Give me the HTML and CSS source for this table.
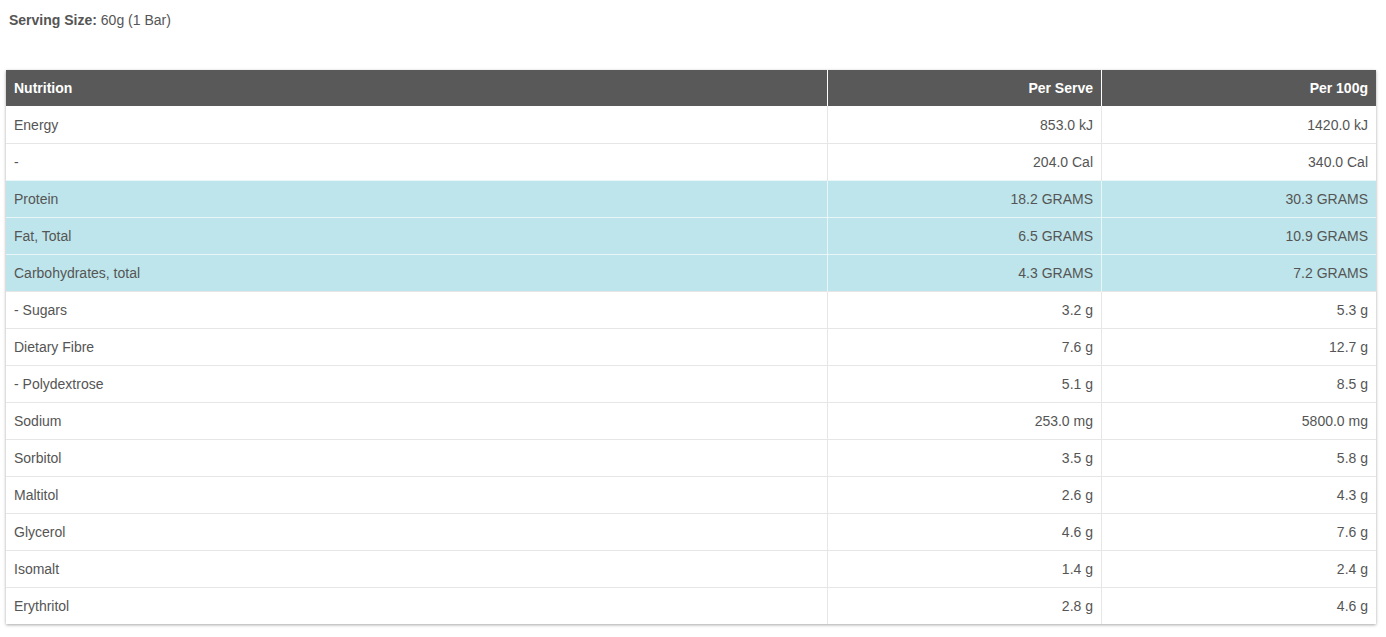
FILE: index.html
```html
<!DOCTYPE html>
<html>
<head>
<meta charset="utf-8">
<link rel="stylesheet" href="styles.css">
</head>
<body>
<div class="page">
  <p class="serving"><strong>Serving Size:</strong> 60g (1 Bar)</p>
  <table class="nutri">
    <thead>
      <tr><th class="name">Nutrition</th><th class="num">Per Serve</th><th class="num">Per 100g</th></tr>
    </thead>
    <tbody>
      <tr><td>Energy</td><td class="num">853.0 kJ</td><td class="num">1420.0 kJ</td></tr>
      <tr><td>-</td><td class="num">204.0 Cal</td><td class="num">340.0 Cal</td></tr>
      <tr class="hl"><td>Protein</td><td class="num">18.2 GRAMS</td><td class="num">30.3 GRAMS</td></tr>
      <tr class="hl"><td>Fat, Total</td><td class="num">6.5 GRAMS</td><td class="num">10.9 GRAMS</td></tr>
      <tr class="hl"><td>Carbohydrates, total</td><td class="num">4.3 GRAMS</td><td class="num">7.2 GRAMS</td></tr>
      <tr><td>- Sugars</td><td class="num">3.2 g</td><td class="num">5.3 g</td></tr>
      <tr><td>Dietary Fibre</td><td class="num">7.6 g</td><td class="num">12.7 g</td></tr>
      <tr><td>- Polydextrose</td><td class="num">5.1 g</td><td class="num">8.5 g</td></tr>
      <tr><td>Sodium</td><td class="num">253.0 mg</td><td class="num">5800.0 mg</td></tr>
      <tr><td>Sorbitol</td><td class="num">3.5 g</td><td class="num">5.8 g</td></tr>
      <tr><td>Maltitol</td><td class="num">2.6 g</td><td class="num">4.3 g</td></tr>
      <tr><td>Glycerol</td><td class="num">4.6 g</td><td class="num">7.6 g</td></tr>
      <tr><td>Isomalt</td><td class="num">1.4 g</td><td class="num">2.4 g</td></tr>
      <tr><td>Erythritol</td><td class="num">2.8 g</td><td class="num">4.6 g</td></tr>
    </tbody>
  </table>
</div>
</body>
</html>
```
FILE: styles.css
```css
html, body {
  margin: 0;
  padding: 0;
  background: #fff;
}
body {
  font-family: Arial, "Liberation Sans", sans-serif;
  color: #555;
  min-height: 637px;
}
.page {
  padding: 12px 10px 12px 6px;
}
.serving {
  margin: 0 0 41px 3px;
  font-size: 14px;
  line-height: 17px;
  color: #555;
}
.serving strong {
  font-weight: bold;
}
.nutri {
  width: 1370px;
  border-collapse: collapse;
  table-layout: fixed;
  box-shadow: 0 1px 3px rgba(0, 0, 0, 0.35);
  font-size: 14px;
}
.nutri th {
  background: #595959;
  color: #fff;
  font-weight: bold;
  height: 36px;
  padding: 0 8px;
  line-height: 20px;
  box-sizing: border-box;
  border-left: 1px solid #fff;
}
.nutri th:first-child {
  border-left: none;
}
.nutri th.name {
  text-align: left;
  width: 821px;
}
.nutri td {
  height: 37px;
  box-sizing: border-box;
  padding: 1px 8px 0;
  line-height: 20px;
  border-top: 1px solid #e6e6e6;
  border-left: 1px solid #e6e6e6;
  color: #555;
}
.nutri tbody tr:first-child td {
  border-top: none;
}
.nutri td:first-child {
  border-left: none;
}
.nutri .num {
  text-align: right;
}
.nutri tr.hl td {
  background: #bee5eb;
  border-top-color: #e9f6f8;
  border-left-color: #e9f6f8;
}
```
